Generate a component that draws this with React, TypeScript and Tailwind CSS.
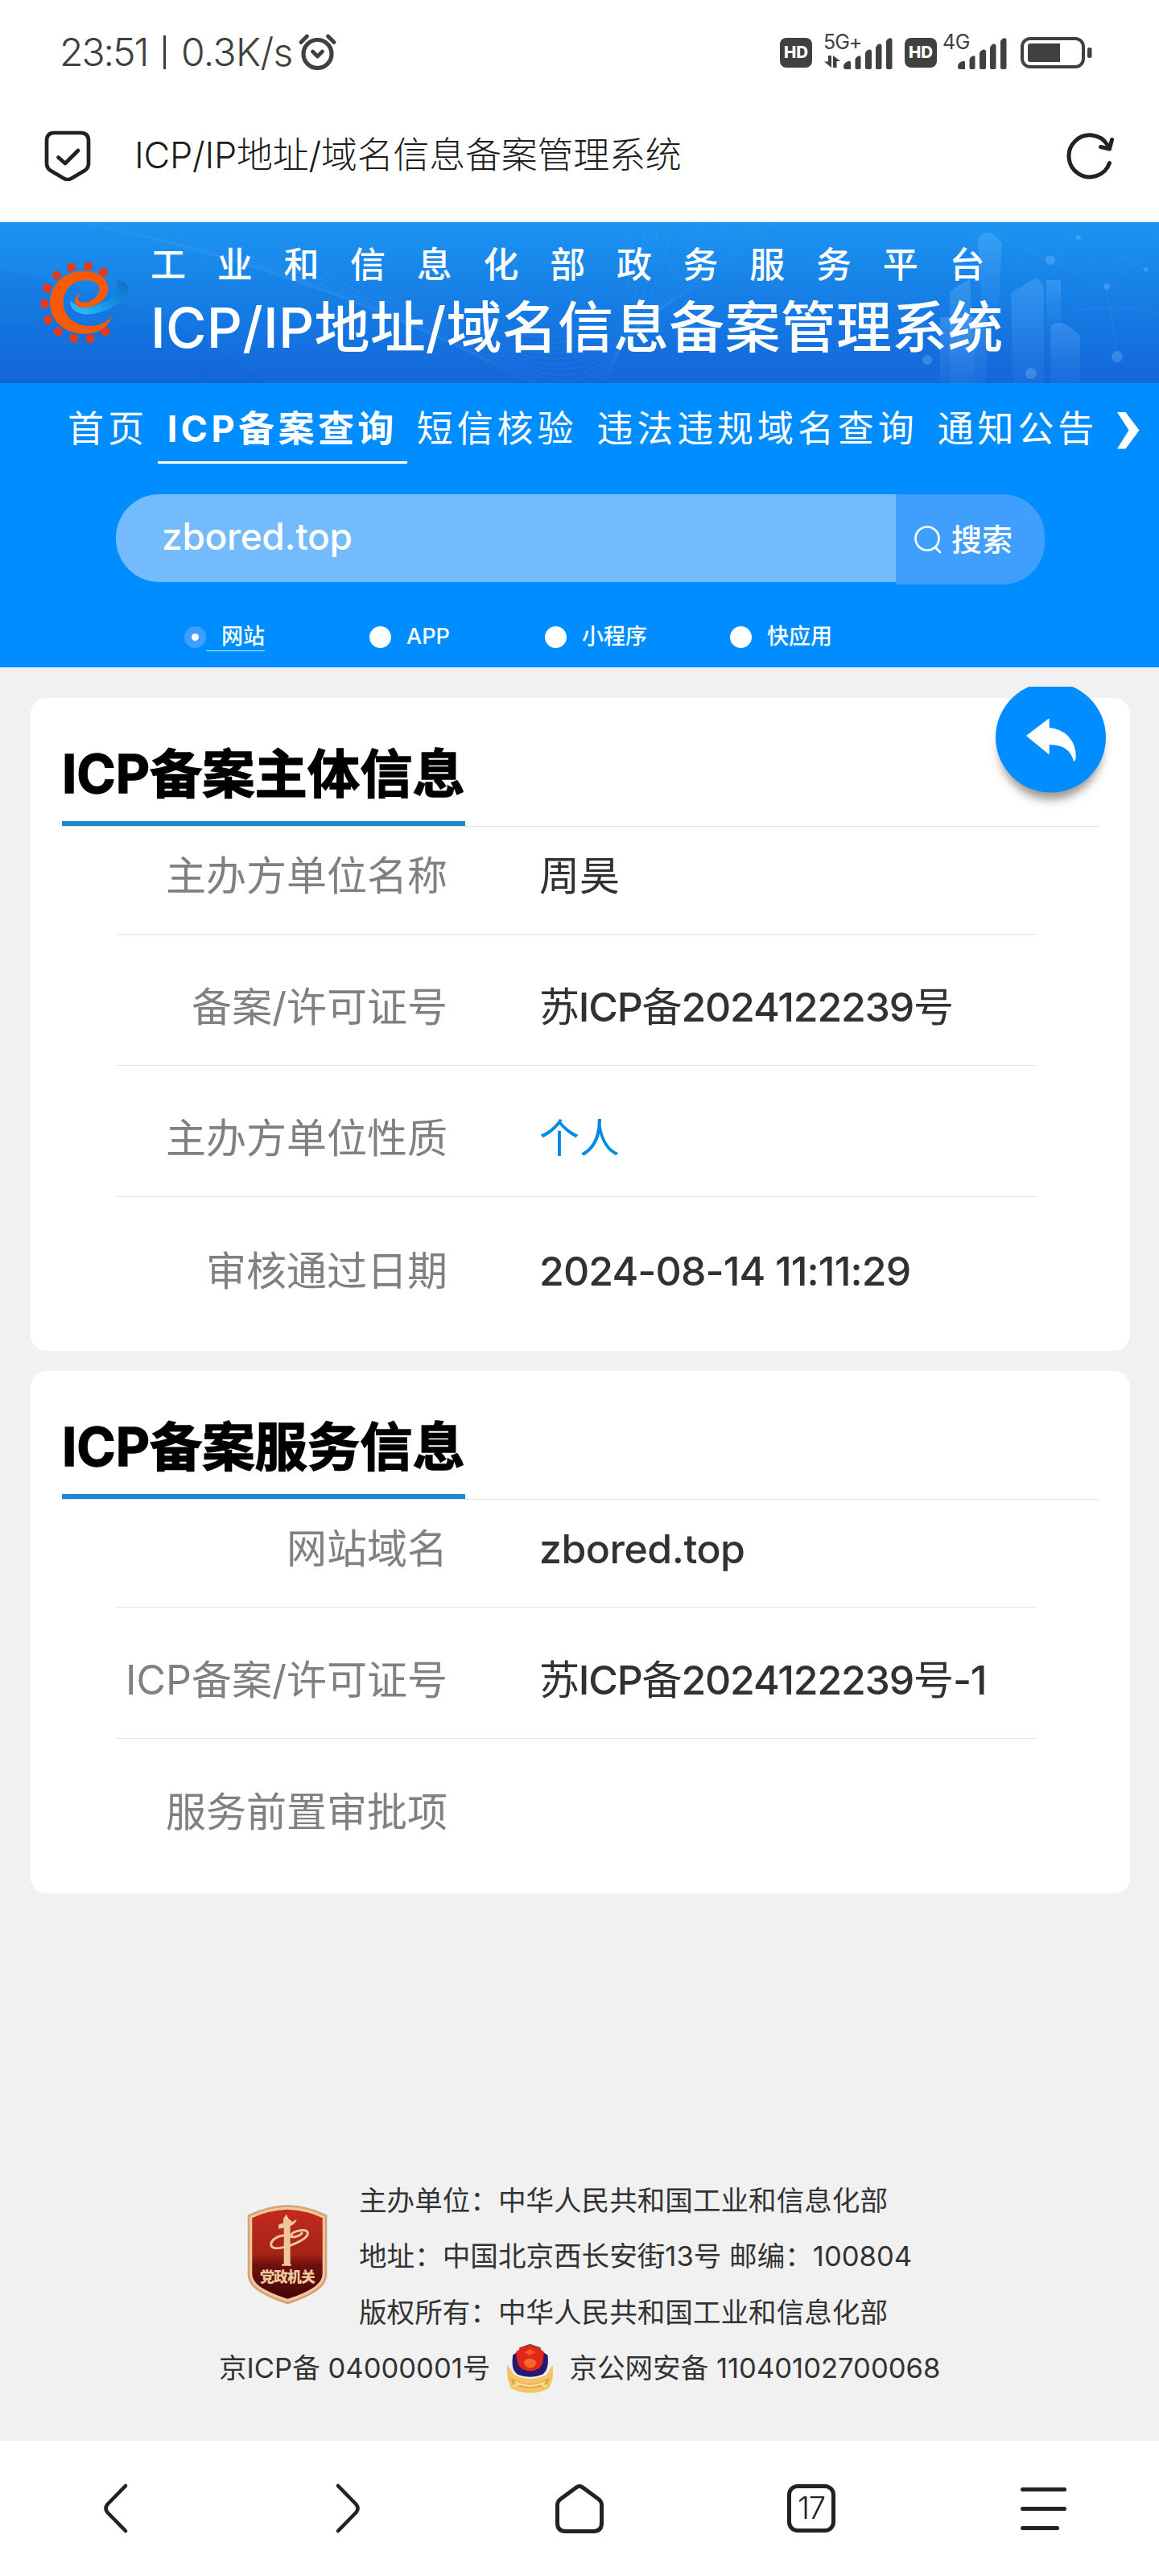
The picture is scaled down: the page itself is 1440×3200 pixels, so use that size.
import type { ReactNode } from "react";

const INK = "#404040";

function AlarmIcon() {
  return (
    <svg className="ml-[3px] h-[48px] w-[50px]" viewBox="0 0 50 48" fill="none" stroke={INK} strokeLinecap="round" strokeLinejoin="round">
      <circle cx="25.5" cy="26" r="17.5" strokeWidth="5.200" />
      <path d="M5 11.500 12.500 4M38.500 4 46 11.500" strokeWidth="4.800" />
      <path d="M19.500 23 25.500 29 31.500 23" strokeWidth="4.800" />
    </svg>
  );
}

function HdBadge() {
  return (
    <span className="flex h-[37px] w-[40px] items-center justify-center rounded-[8px] bg-[#404040] text-[20.5px] leading-none font-extrabold text-white">
      HD
    </span>
  );
}

function SignalBars() {
  return (
    <svg className="h-[39px] w-[61px]" viewBox="0 0 61 39" fill={INK}>
      <path d="M0 36C0 32 3 30 6 29Q9 28 9 31V39H3Q0 39 0 36Z" />
      <path d="M14.500 27Q15 24 19 22.500Q21.500 21.500 21.500 24V37Q21.500 39 19.500 39H16.500Q14.500 39 14.500 37Z" />
      <path d="M27 19Q27.500 16 32 14.500Q35 14 35 17V37Q35 39 33 39H29Q27 39 27 37Z" />
      <path d="M40 13Q40 9.500 44.500 7.500Q47.500 7 47.500 10V37Q47.500 39 45.500 39H42Q40 39 40 37Z" />
      <path d="M53 5Q53 2 57.500 .3Q60.500 0 60.500 3V37Q60.500 39 58.500 39H55Q53 39 53 37Z" />
    </svg>
  );
}

function StatusBar() {
  return (
    <div className="flex h-[130px] items-center bg-white pr-[83px] pl-[74px] text-[#404040]">
      <div className="flex items-center text-[48px] leading-none font-light whitespace-pre">
        <span className="w-[129px] tracking-[-2px]">23:51</span>
        <span className="h-[42px] w-[3px] bg-[#404040]" />
        <span className="ml-[19px] w-[141px] tracking-[-0.6px]">0.3K/s</span>
      </div>
      <AlarmIcon />
      <div className="ml-auto flex items-center">
        <HdBadge />
        <div className="relative ml-[14px] flex h-[44px] w-[86px] items-end justify-end pb-px">
          <span className="absolute -top-[3px] left-0 text-[25px] leading-none tracking-[-1px]">5G+</span>
          <svg className="mr-[4px] mb-[2px] h-[15px] w-[20px]" viewBox="0 0 20 15" fill={INK}>
            <path d="M5 0H9V15L0 7.500H5ZM11 15V0L20 7H15.500V15Z" />
          </svg>
          <SignalBars />
        </div>
        <div className="ml-[15px]">
          <HdBadge />
        </div>
        <div className="relative ml-[7px] flex h-[44px] w-[80px] items-end justify-end pb-px">
          <span className="absolute -top-[3px] left-0 text-[25px] leading-none tracking-[-0.5px]">4G</span>
          <SignalBars />
        </div>
        <svg className="ml-[17px] h-[39px] w-[89px]" viewBox="0 0 89 39">
          <rect x="2" y="2" width="76" height="35" rx="10" fill="none" stroke={INK} strokeWidth="4" />
          <path d="M12 8H49V31H12Q9 31 9 28V11Q9 8 12 8Z" fill={INK} />
          <rect x="83" y="13" width="5.5" height="13" rx="2.5" fill={INK} />
        </svg>
      </div>
    </div>
  );
}

function AddressBar() {
  return (
    <div className="flex h-[146px] items-center bg-white pr-[55px] pb-[21px] pl-[54px] text-[#1c1c1c]">
      <svg className="h-[64px] w-[60px]" viewBox="0 0 60 64" fill="none" stroke="#222" strokeWidth="4.700" strokeLinecap="round" strokeLinejoin="round">
        <path d="M13 4H46Q56 4 56 14V42Q56 48 51 51L34 61Q30 63 26 61L9 51Q4 48 4 42V14Q4 4 13 4Z" />
        <path d="M18.500 34.500 27 42 43 26" />
      </svg>
      <span className="ml-[53px] text-[45px] leading-none font-light tracking-[-0.25px]">ICP/IP地址/域名信息备案管理系统</span>
      <svg className="ml-auto h-[62px] w-[62px]" viewBox="0 0 62 62" fill="none" stroke="#222" strokeWidth="5" strokeLinecap="round" strokeLinejoin="round">
        <path d="M55.500 40.500A26 26 0 1 1 53 18" />
        <path d="M44.500 20.500 55.500 23 58.500 11.500" />
      </svg>
    </div>
  );
}

function GearLogo() {
  const teeth = [
    [265, 84, -35], [209, 62, 5], [146, 66, -15], [92, 96, -35], [55, 143, -70], [46, 202, 90],
    [59, 262, 70], [97, 306, 40], [155, 331, 12], [216, 332, -8], [272, 306, -35],
  ];
  return (
    <svg className="h-[130px] w-[140px]" viewBox="0 0 420 390">
      <defs>
        <linearGradient id="swirl" x1="0" y1="1" x2="1" y2="0">
          <stop offset="0" stopColor="#3cc0ff" />
          <stop offset=".5" stopColor="#1292e2" />
          <stop offset="1" stopColor="#0f6fc4" />
        </linearGradient>
      </defs>
      <g fill="#e23a1c">
        {teeth.map(([x, y, r]) => (
          <rect key={`${x}-${y}`} x={x - 15} y={y - 15} width="30" height="30" rx="6" transform={`rotate(${r} ${x} ${y})`} />
        ))}
      </g>
      <path fill="url(#swirl)" d="M143 188C136 226 176 246 222 240C290 230 356 190 358 150C359 125 338 114 308 116C332 138 306 176 270 194C232 214 164 222 143 188Z" />
      <path fill="#f65a06" d="M298 245C286 288 246 314 196 314C122 314 66 266 66 198C66 128 124 80 190 80C248 80 284 108 283 148C281 192 228 218 190 217C154 215 148 186 178 160C164 186 172 198 196 197C228 194 251 168 250 144C248 122 220 113 192 115C146 118 115 156 116 200C118 250 160 284 212 285C252 285 284 268 298 245Z" />
    </svg>
  );
}

function BannerArt() {
  return (
    <svg className="absolute inset-0 h-[200px] w-[1440px]" viewBox="0 0 1440 200" fill="none">
      <defs>
        <linearGradient id="tower" x1="0" y1="0" x2="0" y2="1">
          <stop offset="0" stopColor="#8fd0ff" stopOpacity=".24" />
          <stop offset="1" stopColor="#5fa8ff" stopOpacity=".08" />
        </linearGradient>
      </defs>
      <g stroke="#8ccaff" strokeOpacity=".06" strokeWidth="2">
        {Array.from({ length: 12 }, (_, i) => (
          <path key={i} d={`M${100 + i * 30} ${i * 6}Q${420 + i * 20} ${70 + i * 12} ${600 + i * 10} ${130 + i * 8}T${980 - i * 18} ${-20 + i * 3}`} />
        ))}
      </g>
      <path d="M0 60Q200 95 330 200H0Z" fill="#0b5fd0" fillOpacity=".12" />
      <g fill="url(#tower)">
        <path d="M1215 20Q1228 4 1245 26L1240 120H1220Z" />
        <path d="M1180 86L1205 70L1212 200H1180Z" />
        <path d="M1256 88L1285 70Q1297 72 1297 88V200H1258Z" />
        <path d="M1300 72H1318V130H1300Z" />
        <path d="M1305 130Q1318 116 1342 142V200H1306Z" />
        <path d="M1168 118H1226V200H1168Z" />
      </g>
      <g stroke="#9fd4ff" strokeOpacity=".1">
        <path d="M1215 5 1305 47 1340 19 1424 59M1305 47 1375 80 1388 167M1340 19 1375 80 1440 20M1330 110Q1390 100 1440 114" />
      </g>
      <g fill="#7fc2ff" fillOpacity=".32">
        <circle cx="1305" cy="47" r="6" />
        <circle cx="1340" cy="19" r="3" />
        <circle cx="1375" cy="80" r="4" />
        <circle cx="1388" cy="167" r="7" />
        <circle cx="1424" cy="59" r="3" />
        <circle cx="1152" cy="171" r="6" />
        <circle cx="1281" cy="188" r="7" />
      </g>
    </svg>
  );
}

function Banner() {
  return (
    <div className="relative h-[200px] bg-linear-to-b from-[#1c94f1] to-[#1466d9]">
      <BannerArt />
      <div className="relative flex h-full pl-[40px] text-white">
        <div className="pt-[34px]">
          <GearLogo />
        </div>
        <div className="ml-[7px] flex flex-col pt-[31px]">
          <span className="text-[44px] leading-[44px] font-medium tracking-[38.7px] whitespace-nowrap">工业和信息化部政务服务平台</span>
          <span className="mt-[20px] text-[69px] leading-[72px] font-medium tracking-[0.2px] whitespace-nowrap">ICP/IP地址/域名信息备案管理系统</span>
        </div>
      </div>
    </div>
  );
}

const NAV = ["首页", "ICP备案查询", "短信核验", "违法违规域名查询", "通知公告"];

function NavBar() {
  return (
    <nav className="flex h-[100px] pl-[72px] text-[45px] leading-[114px] whitespace-nowrap text-white">
      {NAV.map((item) =>
        item === "ICP备案查询" ? (
          <span key={item} className="w-[310px] border-b-[3px] border-white pl-[12px] font-bold tracking-[4.4px]">
            {item}
          </span>
        ) : (
          <span key={item} className="px-[12px] tracking-[4.9px]">
            {item}
          </span>
        ),
      )}
      <svg className="mt-[36px] ml-[12px] h-[46px] w-[28px] shrink-0" viewBox="0 0 28 46" fill="#fff">
        <path d="M0 0H10.500L27.500 22.500 10.500 45.500H0L14.500 22.500Z" />
      </svg>
    </nav>
  );
}

function SearchBox() {
  return (
    <div className="mt-[38px] ml-[144px] flex w-[1154px] items-start text-white">
      <div className="h-[109px] w-[969px] shrink-0 rounded-l-[54px] bg-[#73bbfc] pl-[57px] text-[46px] leading-[104px] font-medium tracking-[-0.3px]">
        zbored.top
      </div>
      <div className="flex h-[112px] w-[185px] shrink-0 items-center rounded-r-[52px] bg-[#409eff] pl-[23px]">
        <svg className="h-[36px] w-[34px]" viewBox="0 0 34 36" fill="none" stroke="#fff" strokeWidth="2.600" strokeLinecap="round">
          <circle cx="16" cy="17" r="14.500" />
          <path d="M26 28 32 34" />
        </svg>
        <span className="ml-[12px] text-[38px] leading-none font-medium">搜索</span>
      </div>
    </div>
  );
}

function Option({ label, checked, className }: { label: string; checked?: boolean; className: string }) {
  return (
    <div className={`flex h-[36px] items-center ${className}`}>
      <span className={`flex size-[27px] items-center justify-center rounded-full ${checked ? "bg-[#409eff]" : "bg-white"}`}>
        {checked && <span className="size-[9px] rounded-full bg-white" />}
      </span>
      <span className={`h-[36px] pl-[19px] text-[27px] leading-[35px] font-medium ${checked ? "border-b border-[#b4f0d8]" : ""}`}>{label}</span>
    </div>
  );
}

function Options() {
  return (
    <div className="mt-[47px] flex text-white">
      <Option label="网站" checked className="ml-[229px] w-[230px]" />
      <Option label="APP" className="w-[218px]" />
      <Option label="小程序" className="w-[230px]" />
      <Option label="快应用" className="" />
    </div>
  );
}

function Card({ title, children, className }: { title: string; children: ReactNode; className: string }) {
  return (
    <section className={`relative ml-[38px] w-[1366px] rounded-[20px] bg-white ${className}`}>
      <div className="mx-[39px] flex h-[160px] border-b border-[#dcdfe6]">
        <h2 className="h-[159px] w-[501px] border-b-[6px] border-[#1f87d1] pt-[62px] text-[65.3px] leading-[66px] font-bold whitespace-nowrap text-black [-webkit-text-stroke:1.4px_#000]">
          {title}
        </h2>
      </div>
      <dl className="ml-[106px] w-[1145px] text-[50px] leading-[50px] whitespace-nowrap">{children}</dl>
    </section>
  );
}

function Row({ label, children, first, last }: { label: string; children?: ReactNode; first?: boolean; last?: boolean }) {
  return (
    <div className={`flex items-end pb-[47px] ${first ? "h-[133.5px]" : "h-[163.4px]"} ${last ? "" : "border-b border-[#e6e6e6]"}`}>
      <dt className="w-[412px] text-right text-[#808080]">{label}</dt>
      <dd className="ml-[114px] font-medium text-[#303133]">{children}</dd>
    </div>
  );
}

function Cjk({ children }: { children: ReactNode }) {
  return <span className="font-normal">{children}</span>;
}

function BackButton() {
  return (
    <svg className="absolute -top-[14px] left-[1183px] h-[170px] w-[168px]" viewBox="1221 853 168 170">
      <defs>
        <filter id="soft" x="-30%" y="-30%" width="160%" height="160%">
          <feGaussianBlur stdDeviation="6" />
        </filter>
      </defs>
      <circle cx="1305.5" cy="929" r="64" fill="#5c5048" fillOpacity=".6" filter="url(#soft)" />
      <circle cx="1305.5" cy="916" r="68.500" fill="#008dff" />
      <path fill="#fff" stroke="#fff" strokeWidth="1.500" strokeLinejoin="round" d="M1276 914 1303 893.500V904.500C1322 906 1337 920 1336 942L1334.500 945C1331 931 1320 924 1303 924.500V936Z" />
    </svg>
  );
}

function GovShield() {
  return (
    <svg className="h-[125px] w-[100px]" viewBox="50 52 302 376">
      <defs>
        <linearGradient id="shield" x1="0" y1="0" x2="0" y2="1">
          <stop offset="0" stopColor="#c42a1c" />
          <stop offset=".5" stopColor="#a52318" />
          <stop offset=".62" stopColor="#6d100e" />
          <stop offset="1" stopColor="#430606" />
        </linearGradient>
      </defs>
      <path d="M52 92Q125 56 201 54Q280 56 350 92V318Q348 350 318 372Q280 402 202 427Q124 402 84 372Q54 350 52 318Z" fill="#d3a377" />
      <path d="M60 97Q130 64 201 62Q274 64 342 97V316Q340 346 312 366Q274 396 202 418Q130 396 90 366Q62 346 60 316Z" fill="#f0c79c" />
      <path d="M69 103Q135 74 201 72Q268 74 333 103V312Q332 340 306 359Q270 386 202 407Q136 386 96 359Q70 340 69 312Z" fill="url(#shield)" />
      <g fill="#f0c79c">
        <path d="M188 278V140L168 144 168 128 186 122 186 106 197 90 206 106 220 118 236 108Q232 126 212 134V278Z" />
        <path d="M180 276H216V283H180Z" />
      </g>
      <path d="M188 168C150 174 134 196 142 210C156 228 226 206 262 182C292 158 276 144 240 152C222 156 214 164 216 174C232 178 252 168 258 158" fill="none" stroke="#f0c79c" strokeWidth="9" />
      <text x="202" y="345" textAnchor="middle" textLength="208" fontSize="54" fontWeight="900" fill="#f0c79c" fontFamily="'Noto Sans CJK SC', sans-serif">
        党政机关
      </text>
    </svg>
  );
}

function PoliceBadge() {
  return (
    <svg className="h-[62px] w-[59px]" viewBox="1018 572 176 186">
      <path d="M1022 652Q1016 700 1036 740Q1070 758 1106 756Q1142 758 1176 740Q1198 700 1190 652L1166 690Q1106 718 1048 690Z" fill="#f3c563" />
      <path d="M1034 700Q1106 746 1178 700L1172 722Q1106 756 1040 722Z" fill="#e5a745" />
      <path d="M1050 716Q1106 744 1162 716M1044 732 1070 722M1168 732 1142 722" stroke="#fbe3a0" strokeWidth="6" fill="none" />
      <path d="M1066 588 1106 574 1146 588 1142 612H1070Z" fill="#7a4a3a" />
      <path d="M1042 618Q1034 672 1060 688Q1106 706 1152 688Q1178 672 1172 618Q1160 600 1106 600Q1052 600 1042 618Z" fill="#241a6e" />
      <path d="M1054 604Q1056 650 1074 666Q1106 684 1140 666Q1156 650 1158 604Q1134 580 1106 580Q1078 580 1054 604Z" fill="#e2261c" />
      <path d="M1082 640Q1104 616 1130 640Q1126 664 1106 664Q1088 662 1082 640Z" fill="#f46a2a" />
      <path d="M1086 606 1106 592 1126 606 1106 616Z" fill="#f05a26" />
    </svg>
  );
}

function Footer() {
  return (
    <footer className="mt-[347px] text-[34.6px] leading-[69.3px] whitespace-nowrap text-[#333]">
      <div className="flex pl-[307px]">
        <div className="mt-[39px]">
          <GovShield />
        </div>
        <div className="ml-[39px]">
          <p>主办单位：中华人民共和国工业和信息化部</p>
          <p>地址：中国北京西长安街13号 邮编：100804</p>
          <p>版权所有：中华人民共和国工业和信息化部</p>
        </div>
      </div>
      <div className="flex items-center pl-[272px]">
        <span>京ICP备 04000001号</span>
        <span className="ml-[20px]">
          <PoliceBadge />
        </span>
        <span className="ml-[19px]">京公网安备 11040102700068</span>
      </div>
    </footer>
  );
}

function BottomBar() {
  return (
    <div className="grid h-[168px] grid-cols-5 items-center justify-items-center bg-white">
      {["M44 4 21.500 27Q17.500 32 21.500 37L44 60", "M20 4 42.500 27Q46.500 32 42.500 37L20 60"].map((d) => (
        <svg key={d} className="size-[64px]" viewBox="0 0 64 64" fill="none" stroke="#222" strokeWidth="4.600" strokeLinecap="round">
          <path d={d} />
        </svg>
      ))}
      <svg className="size-[64px]" viewBox="0 0 64 64" fill="none" stroke="#222" strokeWidth="5" strokeLinejoin="round">
        <path d="M28 6Q32 3 36 6L55 20Q59.500 23 59.500 28V50Q59.500 60.500 49 60.500H15Q4.500 60.500 4.500 50V28Q4.500 23 9 20Z" />
      </svg>
      <span className="flex size-[60px] items-center justify-center rounded-[13px] border-[5px] border-[#222] pb-[3px] text-[38px] leading-none font-light tracking-[-1px] text-[#222]">
        17
      </span>
      <div className="flex flex-col gap-[19px]">
        <span className="h-[5px] w-[57px] rounded-full bg-[#222]" />
        <span className="h-[5px] w-[57px] rounded-full bg-[#222]" />
        <span className="h-[5px] w-[48px] rounded-full bg-[#222]" />
      </div>
    </div>
  );
}

export default function App() {
  return (
    <div className="flex h-[3200px] w-[1440px] flex-col overflow-hidden bg-[#f1f1f1] font-['Inter','Noto_Sans_CJK_SC',sans-serif]">
      <StatusBar />
      <AddressBar />
      <Banner />
      <div className="h-[353px] bg-[#008dff]">
        <NavBar />
        <SearchBox />
        <Options />
      </div>
      <main className="flex-1 pt-[38px]">
        <Card title="ICP备案主体信息" className="h-[811px]">
          <Row label="主办方单位名称" first>
            <Cjk>周昊</Cjk>
          </Row>
          <Row label="备案/许可证号">
            <span className="tracking-[-1.2px]">
              <Cjk>苏</Cjk>ICP<Cjk>备</Cjk>2024122239<Cjk>号</Cjk>
            </span>
          </Row>
          <Row label="主办方单位性质">
            <span className="font-normal text-[#008ae6]">个人</span>
          </Row>
          <Row label="审核通过日期" last>
            <span className="tracking-[-0.9px]">2024-08-14 11:11:29</span>
          </Row>
          <BackButton />
        </Card>
        <Card title="ICP备案服务信息" className="mt-[25px] h-[649px]">
          <Row label="网站域名" first>
            <span className="tracking-[-0.5px]">zbored.top</span>
          </Row>
          <Row label="ICP备案/许可证号">
            <span className="tracking-[-1.2px]">
              <Cjk>苏</Cjk>ICP<Cjk>备</Cjk>2024122239<Cjk>号</Cjk>-1
            </span>
          </Row>
          <Row label="服务前置审批项" last />
        </Card>
        <Footer />
      </main>
      <BottomBar />
    </div>
  );
}
